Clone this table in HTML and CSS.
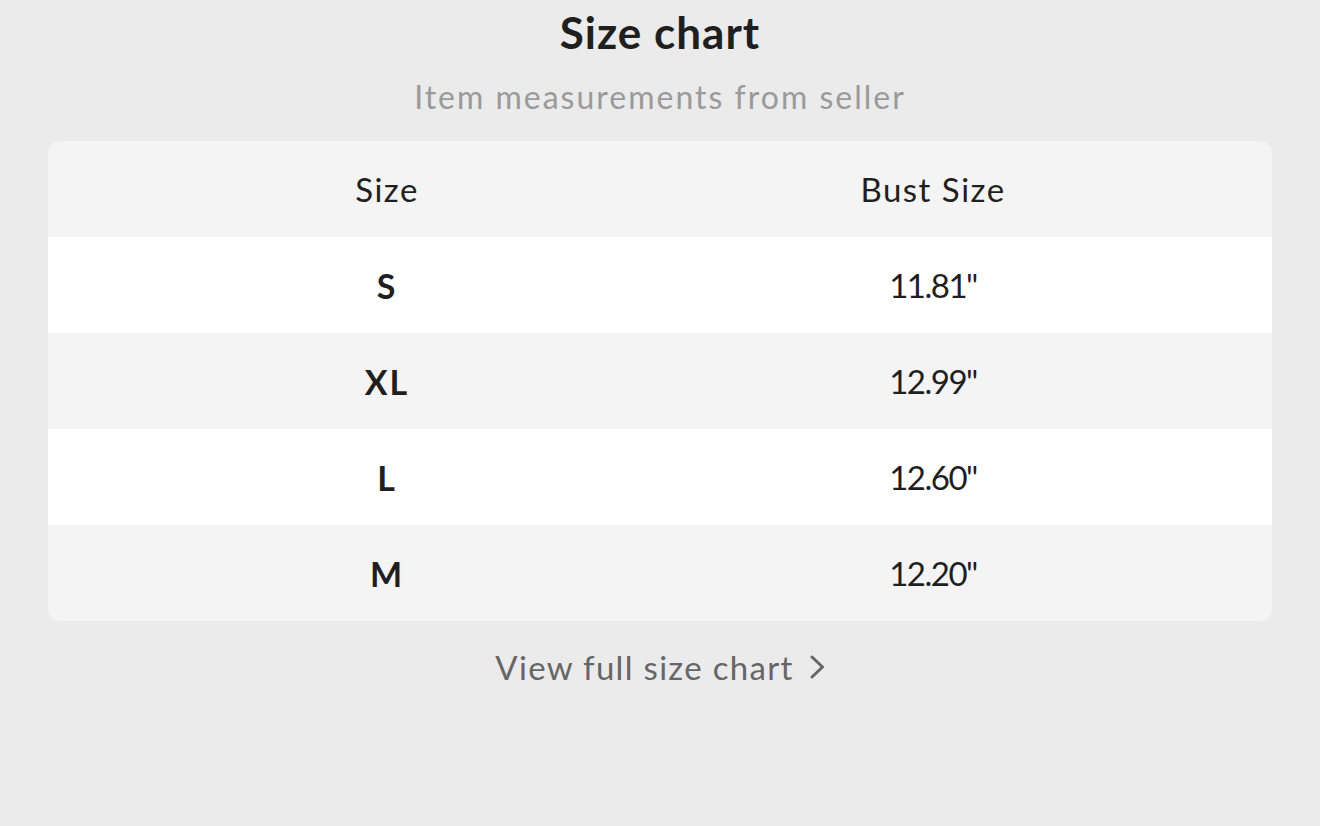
FILE: index.html
```html
<!DOCTYPE html>
<html lang="en">
<head>
  <meta charset="UTF-8">
  <meta name="viewport" content="width=device-width, initial-scale=1.0">
  <title>Size chart</title>
  <link rel="stylesheet" href="styles.css">
</head>
<body>

  <div class="sheet">
    <h1 class="title">Size chart</h1>
    <p class="subtitle">Item measurements from seller</p>

    <div class="size-table">
      <div class="size-row head">
        <span>Size</span>
        <span>Bust Size</span>
      </div>
      <div class="size-row">
        <span class="size-name">S</span>
        <span class="size-value">11.81"</span>
      </div>
      <div class="size-row">
        <span class="size-name">XL</span>
        <span class="size-value">12.99"</span>
      </div>
      <div class="size-row">
        <span class="size-name">L</span>
        <span class="size-value">12.60"</span>
      </div>
      <div class="size-row">
        <span class="size-name">M</span>
        <span class="size-value">12.20"</span>
      </div>
    </div>

    <a class="full-link" href="#">
      View full size chart
      <svg class="chevron" width="15" height="24" viewBox="0 0 15 24">
        <path d="M2 2 L12.5 12 L2 22" fill="none" stroke="#666" stroke-width="3" stroke-linecap="round" stroke-linejoin="round"/>
      </svg>
    </a>
  </div>

</body>
</html>
```

FILE: styles.css
```css
body {
  font-family: Lato, "Noto Sans", sans-serif;
  background-color: #ebebeb;
  margin: 0;
  color: #222;
}

.sheet {
  display: flex;
  flex-direction: column;
  align-items: center;
  padding: 0 48px;
}

.title {
  font-size: 44px;
  font-weight: 700;
  letter-spacing: 1px;
  margin: 6px 0 0;
  line-height: 52px;
  color: #1f1f1f;
}

.subtitle {
  font-size: 32px;
  letter-spacing: 2px;
  color: #9a9a9a;
  margin: 19px 0 0;
  line-height: 40px;
}

.size-table {
  width: 100%;
  margin-top: 24px;
  border-radius: 12px;
  overflow: hidden;
  background-color: #f4f4f4;
}

.size-row {
  display: grid;
  grid-template-columns: 1fr 1fr;
  align-items: center;
  height: 96px;
  padding: 0 66px;
  text-align: center;
  font-size: 33px;
  color: #1f1f1f;
}

.size-row:nth-child(even) {
  background-color: #fff;
}

.size-row.head span {
  letter-spacing: 1.5px;
}

.size-name {
  font-weight: 700;
  font-size: 34px;
  letter-spacing: 2px;
}

.size-value {
  letter-spacing: -1.5px;
}

.full-link {
  margin-top: 26px;
  display: flex;
  align-items: center;
  gap: 16px;
  font-size: 33px;
  letter-spacing: 1.3px;
  color: #666;
  text-decoration: none;
}
```
